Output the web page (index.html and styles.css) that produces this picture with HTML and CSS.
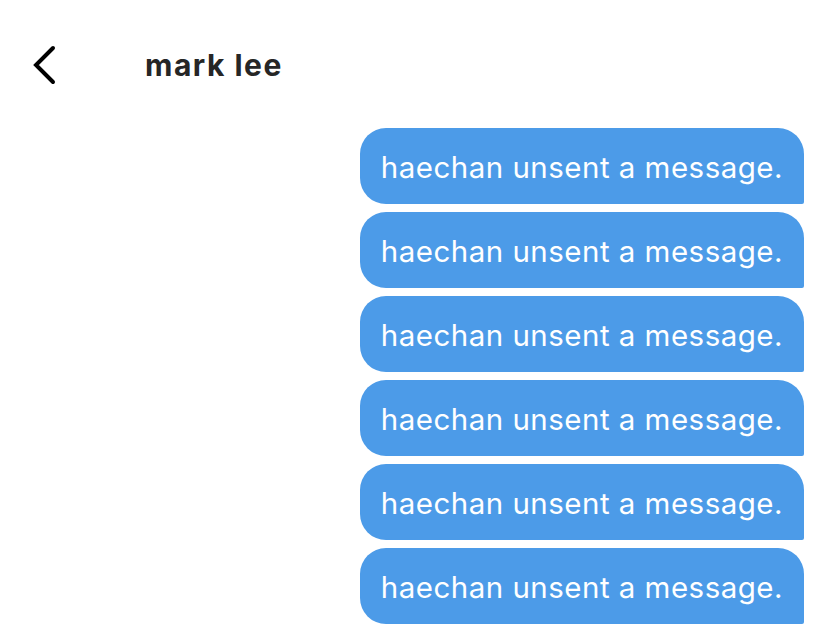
FILE: index.html
```html
<!DOCTYPE html>
<html>
<head>
<meta charset="utf-8">
<link rel="stylesheet" href="styles.css">
</head>
<body>
<div class="screen">
  <header class="topbar">
    <svg class="back" width="24" height="40" viewBox="0 0 24 40">
      <polyline points="21,3 4,20 21,37" fill="none" stroke="#000" stroke-width="4" stroke-linecap="round" stroke-linejoin="miter"/>
    </svg>
    <h1 class="name">mark lee</h1>
  </header>
  <main class="thread">
    <div class="bubble">haechan unsent a message.</div>
    <div class="bubble">haechan unsent a message.</div>
    <div class="bubble">haechan unsent a message.</div>
    <div class="bubble">haechan unsent a message.</div>
    <div class="bubble">haechan unsent a message.</div>
    <div class="bubble">haechan unsent a message.</div>
  </main>
</div>
</body>
</html>
```

FILE: styles.css
```css
html, body {
  margin: 0;
  padding: 0;
  background: #ffffff;
}
body {
  font-family: Inter, "Noto Sans", sans-serif;
  width: 826px;
  height: 635px;
  overflow: hidden;
}
.screen {
  display: flex;
  flex-direction: column;
}
.topbar {
  display: flex;
  align-items: center;
  height: 64px;
  padding: 33px 0 0 32px;
}
.back {
  display: block;
  flex: none;
}
.name {
  margin: 0 0 0 89px;
  font-size: 30px;
  font-weight: 700;
  color: #262626;
  letter-spacing: 1.5px;
}
.thread {
  display: flex;
  flex-direction: column;
  align-items: flex-end;
  gap: 8px;
  padding: 31px 22px 0 0;
}
.bubble {
  box-sizing: border-box;
  height: 76px;
  display: flex;
  align-items: center;
  padding: 2px 21px 0 21px;
  background: #4c9be8;
  color: #ffffff;
  font-size: 29.5px;
  letter-spacing: 0.48px;
  border-radius: 26px 26px 2px 26px;
}
```
